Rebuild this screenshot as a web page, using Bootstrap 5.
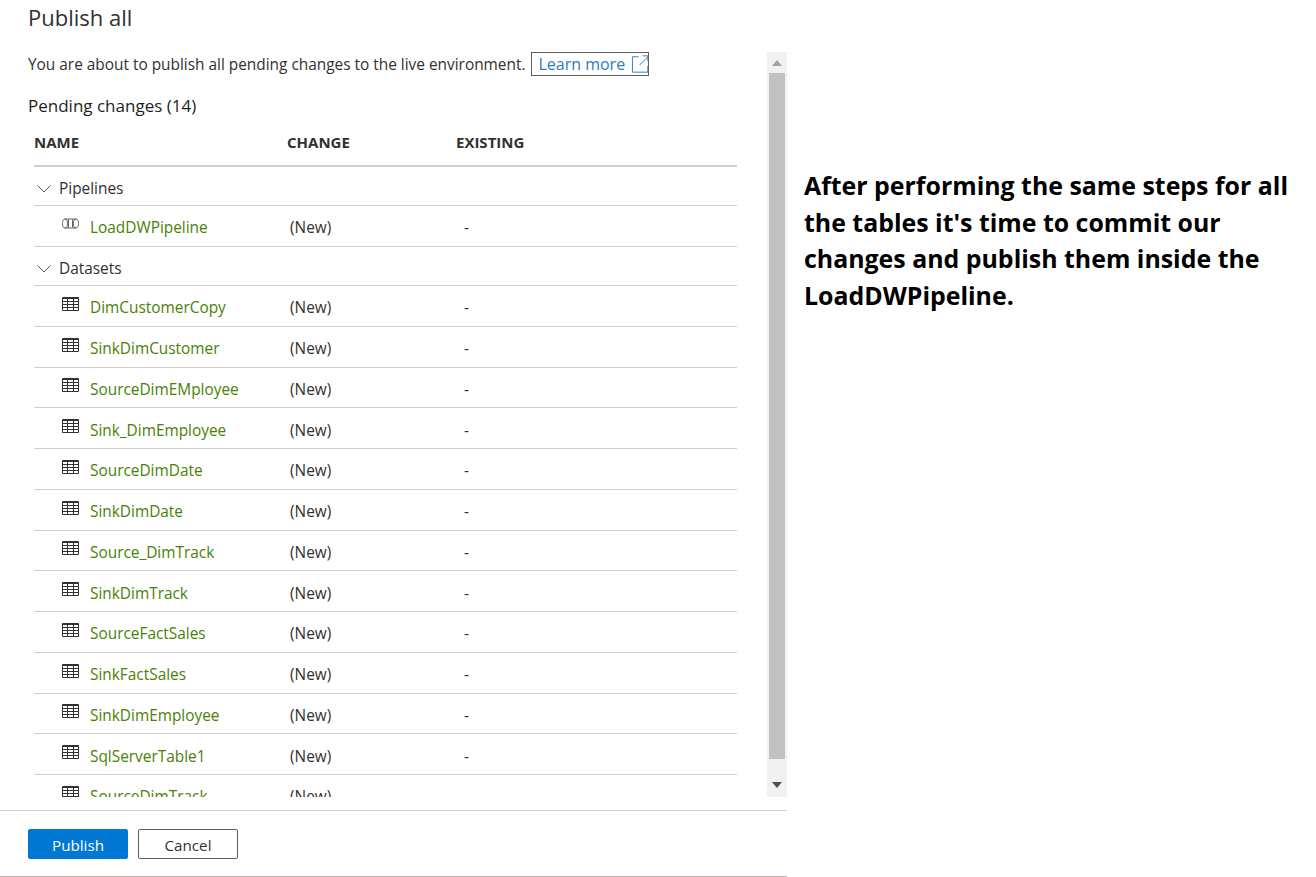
<!DOCTYPE html>
<html lang="en">

<head>
    <meta charset="UTF-8">
    <title>Publish all</title>
    <link href="https://cdn.jsdelivr.net/npm/bootstrap@5.3.0/dist/css/bootstrap.min.css" rel="stylesheet">
    <style>
        html, body {
            height: 877px;
            overflow: hidden;
        }

        body {
            background: #fff;
            color: #323130;
            font-family: "Open Sans", "Noto Sans", sans-serif;
            font-size: 15.4px;
        }

        .publish-pane {
            width: 787px;
            height: 877px;
            border-bottom: 1px solid #bdb8a8;
        }

        .pane-title {
            font-size: 22px;
            font-weight: 400;
            line-height: 28px;
            margin: 3px 0 0 28px;
            height: 21px;
        }

        .pane-scroll {
            height: 745px;
            margin-top: 28px;
        }

        .pane-body {
            width: 739px;
            overflow: hidden;
            padding-left: 28px;
        }

        .intro-line {
            margin: 0;
            padding-top: 2px;
            height: 42px;
            line-height: 22px;
            white-space: nowrap;
        }

        .learn-box {
            display: inline-flex;
            align-items: center;
            gap: 6px;
            border: 1px solid #605e5c;
            color: #2b7cc4;
            font-size: 16px;
            line-height: 22px;
            width: 118px;
            height: 24px;
            padding: 0 0 0 6px;
            margin-left: 2px;
            text-decoration: none;
            vertical-align: top;
            margin-top: -2px;
        }

        .pending-title {
            color: #201f1e;
            font-size: 17px;
            font-weight: 400;
            line-height: 24px;
            margin: 0;
            height: 35px;
        }

        .changes-table {
            width: 703px;
            margin-left: 6px;
            table-layout: fixed;
            border-collapse: collapse;
            color: #323130;
        }

        .changes-table th {
            font-size: 15px;
            font-weight: 700;
            height: 37px;
            padding: 0 0 10px;
            border-bottom: 2px solid #d2d0ce;
            vertical-align: middle;
        }

        .changes-table td {
            padding: 4px 0 0;
            border-bottom: 1px solid #d2d0ce;
            vertical-align: middle;
        }

        .changes-table .group-row td {
            height: 39px;
            padding-top: 6px;
        }

        .item-row td {
            height: 40.75px;
        }

        .item-row.pipe-row td {
            height: 41.5px;
        }

        .chev {
            margin: 0 8px 0 3px;
            vertical-align: 1px;
        }

        .item-name {
            color: #498205;
            display: flex;
            align-items: center;
            padding-left: 28px;
            gap: 11px;
        }

        .item-name svg {
            flex: none;
            margin-top: -8px;
        }

        .new-cell {
            padding-left: 3px !important;
        }

        .dash-cell {
            padding-left: 8px !important;
        }

        .fake-scrollbar {
            width: 20px;
            background: #f1f1f1;
            margin-left: auto;
        }

        .bar-arrow {
            height: 21px;
        }

        .bar-arrow-down {
            height: 38px;
            padding-top: 14px;
        }

        .bar-thumb {
            width: 16px;
            height: 686px;
            margin: 0 2px;
            background: #c1c1c1;
        }

        .pane-footer {
            margin-top: 13px;
            border-top: 1px solid #d2d0ce;
            padding: 18px 28px 0;
            gap: 10px;
        }

        .btn-publish,
        .btn-dismiss {
            width: 100px;
            height: 30px;
            padding: 2px 0 0;
            font-size: 15.2px;
            border-radius: 2px;
        }

        .btn-publish {
            background: #0078d4;
            border: 1px solid #0078d4;
            color: #fff;
        }

        .btn-dismiss {
            background: #fff;
            border: 1px solid #605e5c;
            color: #323130;
        }

        .side-note {
            width: 500px;
            margin: 167px 0 0 17px;
            color: #000;
            font-size: 24.9px;
            font-weight: 700;
            line-height: 36.6px;
        }
    </style>
</head>

<body>
    <div class="d-flex">
        <div class="publish-pane">
            <h1 class="pane-title">Publish all</h1>
            <div class="pane-scroll d-flex">
                <div class="pane-body">
                    <p class="intro-line">You are about to publish all pending changes to the live environment.
                        <a href="#" class="learn-box">Learn more
                            <svg width="18" height="18" viewBox="0 0 18 18" fill="none" stroke="#2b7cc4" stroke-width="1">
                                <path d="M8 1.5H1.5V17.5H17.5V11" />
                                <path d="M9 10L17.5 1.5M12 .5H17.5V6" />
                            </svg>
                        </a>
                    </p>
                    <h2 class="pending-title">Pending changes (14)</h2>
                    <table class="changes-table">
                        <colgroup>
                            <col style="width:253px">
                            <col style="width:169px">
                            <col>
                        </colgroup>
                        <thead>
                            <tr>
                                <th>NAME</th>
                                <th>CHANGE</th>
                                <th>EXISTING</th>
                            </tr>
                        </thead>
                        <tbody id="change-rows"></tbody>
                    </table>
                </div>
                <div class="fake-scrollbar">
                    <div class="bar-arrow d-flex justify-content-center align-items-center">
                        <svg width="10" height="6" viewBox="0 0 10 6"><path d="M5 0L10 6H0Z" fill="#a3a3a3" /></svg>
                    </div>
                    <div class="bar-thumb"></div>
                    <div class="bar-arrow-down d-flex justify-content-center align-items-center">
                        <svg width="10" height="6" viewBox="0 0 10 6"><path d="M0 0H10L5 6Z" fill="#505050" /></svg>
                    </div>
                </div>
            </div>
            <div class="pane-footer d-flex">
                <button class="btn-publish">Publish</button>
                <button class="btn-dismiss">Cancel</button>
            </div>
        </div>
        <div class="side-note">After performing the same steps for all the tables it's time to commit our changes and publish them inside the LoadDWPipeline.</div>
    </div>

    <script>
        const groups = [
            { name: "Pipelines", icon: "pipe", rowClass: "pipe-row", items: ["LoadDWPipeline"] },
            {
                name: "Datasets",
                icon: "table",
                rowClass: "",
                items: ["DimCustomerCopy", "SinkDimCustomer", "SourceDimEMployee", "Sink_DimEmployee",
                    "SourceDimDate", "SinkDimDate", "Source_DimTrack", "SinkDimTrack", "SourceFactSales",
                    "SinkFactSales", "SinkDimEmployee", "SqlServerTable1", "SourceDimTrack"]
            }
        ];

        const chevron = `<svg class="chev" width="14" height="8" viewBox="0 0 14 8" fill="none" stroke="#605e5c"><path d="M.5 .5L7 7L13.5 .5" /></svg>`;

        const icons = {
            pipe: `<svg width="17" height="11" viewBox="0 0 17 11" fill="none" stroke="#605e5c">
                <path d="M3 1H14M3 10H14M6.5 1.5V9.5M10.5 1.5V9.5" />
                <ellipse cx="3" cy="5.5" rx="2.5" ry="4.5" />
                <ellipse cx="14" cy="5.5" rx="2.5" ry="4.5" />
            </svg>`,
            table: `<svg width="17" height="14" viewBox="0 0 17 14" fill="none" stroke="#323130">
                <path d="M.5 .5H16.5V13.5H.5Z" />
                <path d="M.5 1.5H16.5" />
                <path d="M.5 4.5H16.5M.5 7.5H16.5M.5 10.5H16.5M5.5 2V13M11.5 2V13" />
            </svg>`
        };

        function renderRows() {
            const body = document.getElementById("change-rows");
            let html = "";
            groups.forEach(g => {
                html += `<tr class="group-row"><td colspan="3">${chevron}${g.name}</td></tr>`;
                g.items.forEach(name => {
                    html += `
                    <tr class="item-row ${g.rowClass}">
                        <td><div class="item-name">${icons[g.icon]}<span>${name}</span></div></td>
                        <td class="new-cell">(New)</td>
                        <td class="dash-cell">-</td>
                    </tr>`;
                });
            });
            body.innerHTML = html;
        }

        renderRows();
    </script>
</body>

</html>
